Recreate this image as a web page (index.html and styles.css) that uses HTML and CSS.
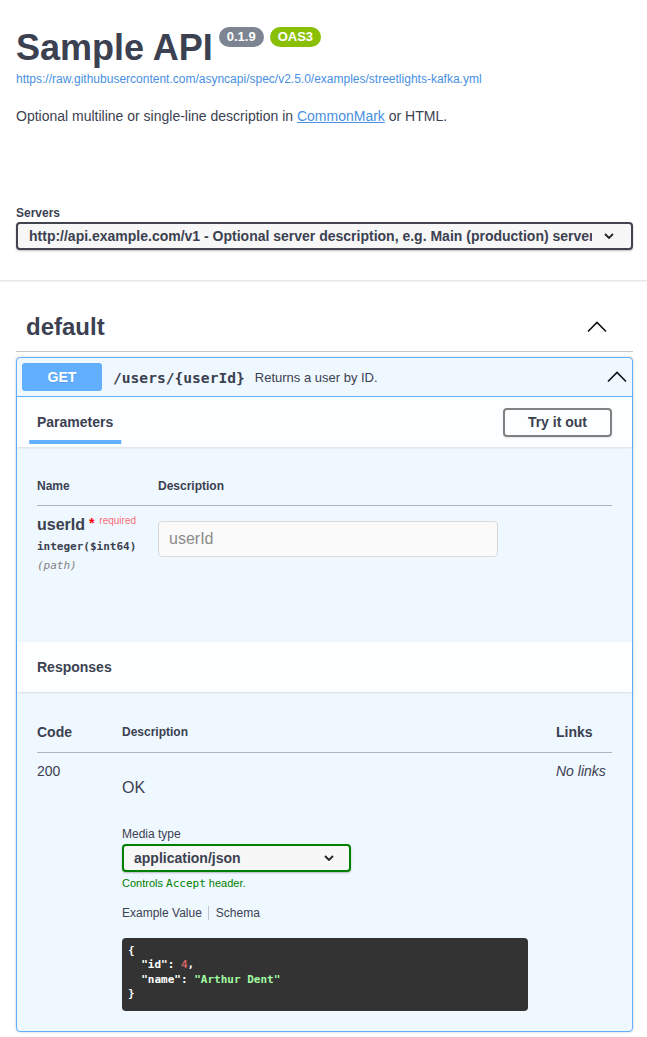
FILE: index.html
```html
<!DOCTYPE html>
<html lang="en">
<head>
<meta charset="utf-8">
<title>Sample API</title>
<link rel="stylesheet" href="styles.css">
</head>
<body>
<div class="info">
  <div class="title-row">
    <h2 class="title">Sample API</h2>
    <span class="badge badge-version">0.1.9</span>
    <span class="badge badge-oas">OAS3</span>
  </div>
  <a class="spec-url" href="#">https://raw.githubusercontent.com/asyncapi/spec/v2.5.0/examples/streetlights-kafka.yml</a>
  <p class="description">Optional multiline or single-line description in <a href="#">CommonMark</a> or HTML.</p>
</div>

<section class="scheme-container">
  <span class="servers-label">Servers</span>
  <div class="select select-servers">
    <span class="select-text">http://api.example.com/v1 - Optional server description, e.g. Main (production) server</span>
    <svg class="select-arrow" viewBox="0 0 10 6"><polyline points="1,1 5,5 9,1" fill="none" stroke="#222" stroke-width="1.8"/></svg>
  </div>
</section>

<section class="tag-section">
  <h3 class="tag">
    <span class="tag-name">default</span>
    <svg class="tag-arrow" viewBox="0 0 20 20"><polyline points="1,14.5 10,5.5 19,14.5" fill="none" stroke="#111" stroke-width="1.6"/></svg>
  </h3>

  <div class="opblock">
    <div class="summary">
      <span class="method">GET</span>
      <span class="path">/users/{userId}</span>
      <span class="summary-desc">Returns a user by ID.</span>
      <svg class="summary-arrow" viewBox="0 0 20 20"><polyline points="1,14.5 10,5.5 19,14.5" fill="none" stroke="#111" stroke-width="1.6"/></svg>
    </div>

    <div class="section-header">
      <h4 class="section-title"><span class="tab-active">Parameters</span></h4>
      <button class="try-btn" type="button">Try it out</button>
    </div>

    <div class="table-container">
      <table class="table">
        <thead>
          <tr>
            <th class="col-name">Name</th>
            <th>Description</th>
          </tr>
        </thead>
        <tbody>
          <tr>
            <td class="col-name">
              <div class="param-name">userId<span class="req-star">&nbsp;*</span><span class="req-text">required</span></div>
              <div class="param-type">integer($int64)</div>
              <div class="param-in">(path)</div>
            </td>
            <td>
              <input class="param-input" type="text" placeholder="userId">
            </td>
          </tr>
        </tbody>
      </table>
    </div>

    <div class="section-header">
      <h4 class="section-title">Responses</h4>
    </div>

    <div class="responses-inner">
      <table class="table">
        <thead>
          <tr>
            <th class="col-code th-big">Code</th>
            <th>Description</th>
            <th class="col-links th-big">Links</th>
          </tr>
        </thead>
        <tbody>
          <tr>
            <td class="cell-text">200</td>
            <td>
              <p class="resp-ok">OK</p>
              <div class="media-type">
                <span class="media-label">Media type</span>
                <div class="select select-media">
                  <span class="select-text">application/json</span>
                  <svg class="select-arrow" viewBox="0 0 10 6"><polyline points="1,1 5,5 9,1" fill="none" stroke="#222" stroke-width="1.8"/></svg>
                </div>
                <div class="controls">Controls <code class="mono">Accept</code> header.</div>
              </div>
              <div class="example-tabs">
                <span class="ex-tab ex-active">Example Value</span><span class="ex-tab">Schema</span>
              </div>
<pre class="code">{
  "id": <span class="num">4</span>,
  "name": <span class="str">"Arthur Dent"</span>
}</pre>
            </td>
            <td class="cell-text no-links">No links</td>
          </tr>
        </tbody>
      </table>
    </div>
  </div>
</section>
</body>
</html>
```

FILE: styles.css
```css
* {
  box-sizing: border-box;
}

body {
  margin: 0;
  font-family: "Liberation Sans", Arial, sans-serif;
  color: #3b4151;
  background: #fff;
}

/* ---------- info ---------- */
.info {
  padding: 27px 14px 0 16px;
}

.title-row {
  display: flex;
  align-items: flex-start;
  gap: 6px;
}

.title {
  margin: 0;
  font-size: 36px;
  line-height: 42px;
  font-weight: 700;
  color: #3b4151;
}

.badge {
  margin-top: 0;
  padding: 2px 8px;
  border-radius: 57px;
  font-size: 13px;
  line-height: 16px;
  font-weight: 700;
  color: #fff;
}

.badge-version {
  background: #7d8492;
}

.badge-oas {
  background: #89bf04;
}

.spec-url {
  display: block;
  margin-top: 3px;
  font-size: 12px;
  line-height: 14px;
  color: #4990e2;
  text-decoration: none;
}

.description {
  margin: 22px 0 0;
  font-size: 14px;
  line-height: 16px;
}

.description a {
  color: #4990e2;
}

/* ---------- servers ---------- */
.scheme-container {
  margin-top: 50px;
  padding: 30px 14px 30px 16px;
  background: #fff;
  box-shadow: 0 1px 2px 0 rgba(0, 0, 0, 0.15);
}

.servers-label {
  display: block;
  padding-top: 2px;
  margin-bottom: 2px;
  font-size: 12px;
  line-height: 14px;
  font-weight: 700;
}

.select {
  display: flex;
  align-items: center;
  height: 28px;
  border: 2px solid #41444e;
  border-radius: 4px;
  background: #f7f7f7;
  box-shadow: 0 1px 2px 0 rgba(0, 0, 0, 0.25);
  font-size: 14px;
  font-weight: 700;
  color: #3b4151;
}

.select-servers {
  padding: 0 17px 0 11px;
}

.select-text {
  flex: 1;
  min-width: 0;
  overflow: hidden;
  white-space: nowrap;
}

.select-arrow {
  flex: none;
  width: 10px;
  height: 6px;
  margin-left: 12px;
}

/* ---------- tag ---------- */
.tag-section {
  padding: 23px 14px 20px 16px;
}

.tag {
  display: flex;
  align-items: center;
  margin: 0 0 5px;
  padding: 10px 26px 10px 10px;
  border-bottom: 1px solid rgba(59, 65, 81, 0.3);
  font-size: 24px;
  line-height: 28px;
  font-weight: 700;
}

.tag-name {
  flex: 1;
}

.tag-arrow,
.summary-arrow {
  flex: none;
  width: 20px;
  height: 20px;
}

/* ---------- opblock ---------- */
.opblock {
  border: 1px solid #61affe;
  border-radius: 4px;
  background: #eff7ff;
  box-shadow: 0 0 3px rgba(0, 0, 0, 0.19);
}

.summary {
  display: flex;
  align-items: center;
  padding: 5px;
  border-bottom: 1px solid #61affe;
}

.method {
  min-width: 80px;
  padding: 6px 0;
  border-radius: 3px;
  background: #61affe;
  color: #fff;
  font-size: 14px;
  line-height: 16px;
  font-weight: 700;
  text-align: center;
  text-shadow: 0 1px 0 rgba(0, 0, 0, 0.1);
}

.path {
  padding: 0 10px 0 11px;
  font-family: "DejaVu Sans Mono", monospace;
  font-size: 14.6px;
  font-weight: 700;
}

.summary-desc {
  flex: 1;
  font-size: 13px;
}

.section-header {
  display: flex;
  align-items: center;
  min-height: 50px;
  padding: 8px 20px;
  background: rgba(255, 255, 255, 0.8);
  box-shadow: 0 1px 2px rgba(0, 0, 0, 0.1);
}

.section-title {
  flex: 1;
  margin: 0;
  font-size: 14px;
  line-height: 16px;
  font-weight: 700;
}

.tab-active {
  position: relative;
}

.tab-active::after {
  content: "";
  position: absolute;
  left: 50%;
  bottom: -14px;
  width: 120%;
  height: 4px;
  transform: translateX(-50%);
  background: #61affe;
}

.try-btn {
  height: 29px;
  padding: 0 23px;
  border: 2px solid #808080;
  border-radius: 4px;
  background: transparent;
  box-shadow: 0 1px 2px rgba(0, 0, 0, 0.1);
  font-family: inherit;
  font-size: 14px;
  font-weight: 700;
  color: #3b4151;
}

/* ---------- tables ---------- */
.table-container {
  padding: 20px 20px 69px;
}

.responses-inner {
  padding: 20px;
}

.table {
  width: 100%;
  border-collapse: collapse;
}

.table th {
  padding: 12px 0;
  text-align: left;
  font-size: 12px;
  line-height: 14px;
  font-weight: 700;
  border-bottom: 1px solid rgba(59, 65, 81, 0.2);
}

.table th.th-big {
  font-size: 14px;
  line-height: 16px;
}

.table td {
  padding: 10px 0 0;
  vertical-align: top;
}

.col-name {
  width: 121px;
}

.col-code {
  width: 85px;
}

.col-links {
  width: 56px;
}

.param-name {
  font-size: 16px;
  line-height: 18px;
  font-weight: 700;
}

.req-star {
  color: #ff0000;
  font-size: 14px;
  line-height: 0;
  vertical-align: 2px;
}

.req-text {
  padding-left: 5px;
  color: rgba(255, 0, 0, 0.6);
  font-size: 10px;
  font-weight: 400;
  line-height: 0;
  vertical-align: 6px;
}

.param-type {
  padding-top: 6px;
  font-family: "DejaVu Sans Mono", monospace;
  font-size: 11px;
  line-height: 14px;
  font-weight: 600;
}

.param-in {
  padding-top: 5px;
  font-family: "DejaVu Sans Mono", monospace;
  font-size: 11px;
  line-height: 14px;
  font-style: italic;
  color: #808080;
}

.param-input {
  display: block;
  width: 340px;
  height: 36px;
  margin-top: 5px;
  padding: 8px 10px;
  border: 1px solid #d9d9d9;
  border-radius: 4px;
  background: #fafafa;
  font-family: inherit;
  font-size: 16px;
  color: #3b4151;
}

.param-input::placeholder {
  color: #8a8a8a;
}

.cell-text {
  font-size: 14px;
  line-height: 16px;
}

.no-links {
  font-style: italic;
}

.resp-ok {
  margin: 16px 0 0;
  font-size: 16px;
  line-height: 18px;
}

.media-type {
  margin-top: 30px;
}

.media-label {
  display: block;
  margin-bottom: 3px;
  font-size: 12px;
  line-height: 14px;
}

.select-media {
  width: 229px;
  padding: 0 15px 0 10px;
  border-color: #008000;
}

.controls {
  margin-top: 5px;
  font-size: 11px;
  line-height: 13px;
  color: #008000;
}

.mono {
  font-family: "DejaVu Sans Mono", monospace;
  font-size: 11px;
}

.example-tabs {
  display: flex;
  margin-top: 16px;
  font-size: 12px;
  line-height: 14px;
}

.ex-tab {
  color: #3b4151;
}

.ex-active {
  padding-right: 6px;
  margin-right: 7px;
  border-right: 1px solid rgba(0, 0, 0, 0.2);
}

.code {
  width: 406px;
  margin: 18px 0 0;
  padding: 6px 6px 9px;
  border-radius: 4px;
  background: #333;
  color: #fff;
  font-family: "DejaVu Sans Mono", monospace;
  font-size: 11px;
  line-height: 14.4px;
  font-weight: 700;
  white-space: pre;
}

.num {
  color: #d36363;
}

.str {
  color: #a2fca2;
}
```
